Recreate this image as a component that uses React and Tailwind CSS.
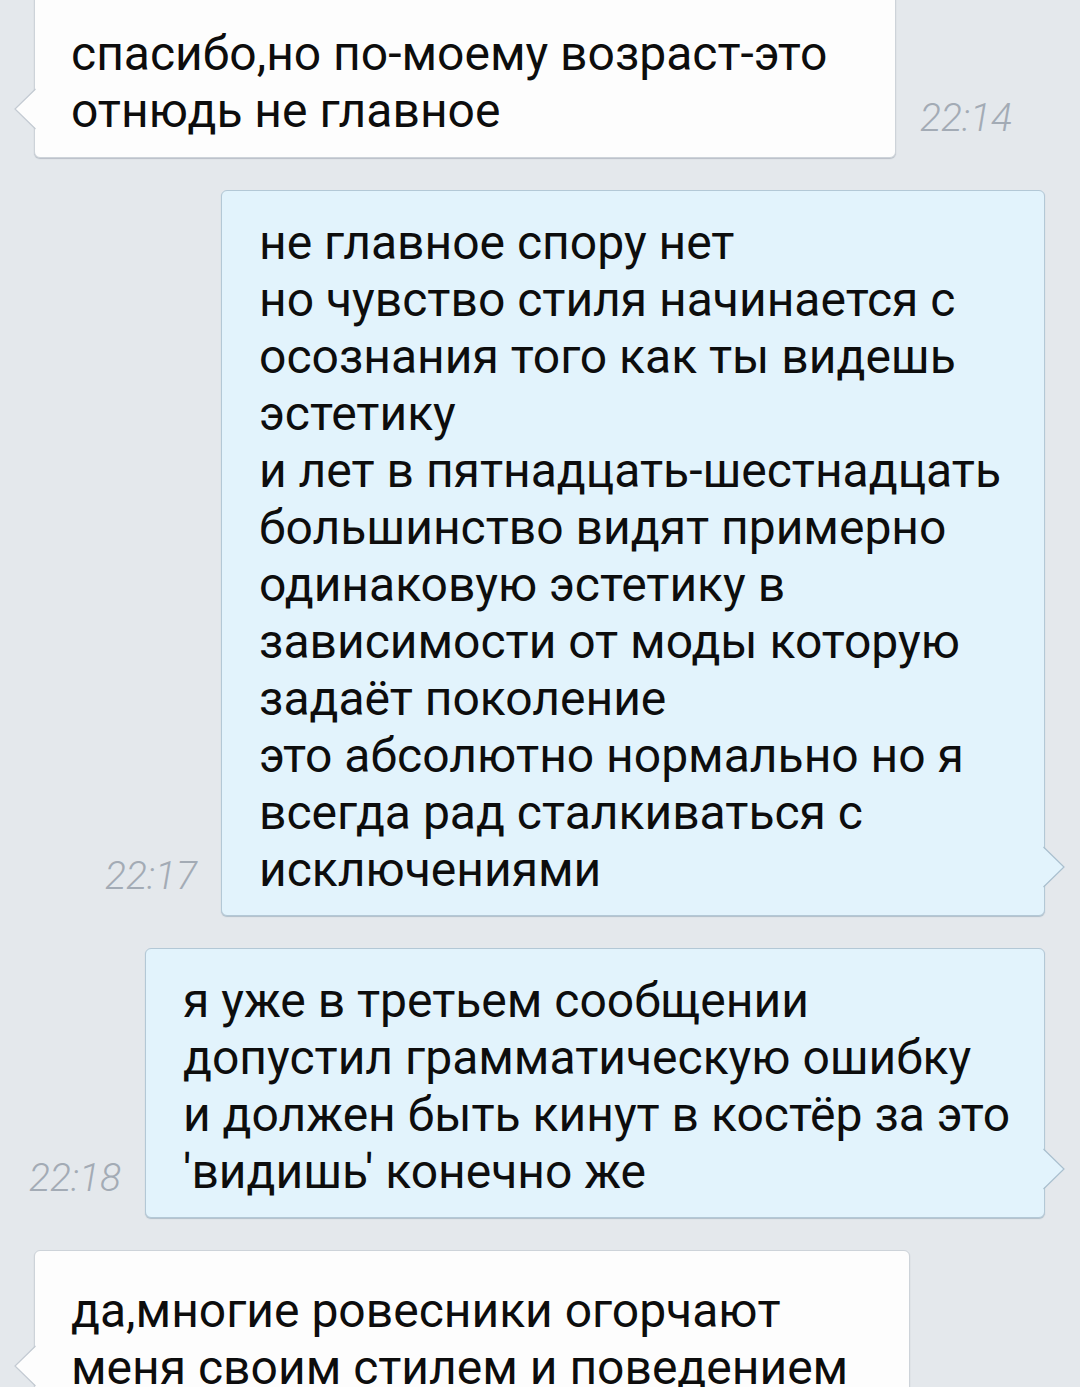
import React from 'react';

const messages = [
  {
    id: 1,
    out: false,
    time: '22:14',
    width: 'w-[862px]',
    pull: '-mt-[7px]',
    lines: ['спасибо,но по-моему возраст-это', 'отнюдь не главное'],
  },
  {
    id: 2,
    out: true,
    time: '22:17',
    width: 'w-[824px]',
    lines: [
      'не главное спору нет',
      'но чувство стиля начинается с',
      'осознания того как ты видешь',
      'эстетику',
      'и лет в пятнадцать-шестнадцать',
      'большинство видят примерно',
      'одинаковую эстетику в',
      'зависимости от моды которую',
      'задаёт поколение',
      'это абсолютно нормально но я',
      'всегда рад сталкиваться с',
      'исключениями',
    ],
  },
  {
    id: 3,
    out: true,
    time: '22:18',
    width: 'w-[900px]',
    lines: [
      'я уже в третьем сообщении',
      'допустил грамматическую ошибку',
      'и должен быть кинут в костёр за это',
      "'видишь' конечно же",
    ],
  },
  {
    id: 4,
    out: false,
    time: '',
    width: 'w-[876px]',
    lines: ['да,многие ровесники огорчают', 'меня своим стилем и поведением'],
  },
];

function Tail({ out }) {
  if (out) {
    return (
      <svg className="absolute -right-[21px] bottom-[28px] overflow-visible" width="22" height="40" viewBox="0 0 22 40">
        <polygon points="0,0 21,20 0,40" fill="#e2f3fc" />
        <polyline points="0.5,0 21,20 0.5,40" fill="none" stroke="#a9bfce" strokeWidth="1.2" />
      </svg>
    );
  }
  return (
    <svg className="absolute -left-[21px] bottom-[28px] overflow-visible" width="22" height="40" viewBox="0 0 22 40">
      <polygon points="22,0 1,20 22,40" fill="#fdfdfd" />
      <polyline points="21.5,0 1,20 21.5,40" fill="none" stroke="#c3cad2" strokeWidth="1.2" />
    </svg>
  );
}

function Time({ value, out }) {
  if (!value) return null;
  return (
    <span
      className={`text-[39px] leading-[46px] italic font-light text-[#a3abb5] mb-[17px] whitespace-nowrap ${out ? 'mr-[24px]' : 'ml-[24px]'}`}
    >
      {value}
    </span>
  );
}

function Bubble({ msg }) {
  const tone = msg.out
    ? 'bg-[#e2f3fc] border-[#b3c8d6] shadow-[0_1px_1px_rgba(110,140,160,0.45)] pl-[37px] pt-[23px] pb-[17px]'
    : 'bg-[#fdfdfd] border-[#cdd3d9] shadow-[0_1px_1px_rgba(120,130,145,0.4)] pl-[36px] pt-[31px] pb-[18px]';

  return (
    <div className={`relative shrink-0 rounded-[6px] border ${tone} ${msg.width}`}>
      <Tail out={msg.out} />
      <div className="text-[48px] leading-[57px] text-[#0d0d0d] whitespace-pre">
        {msg.lines.join('\n')}
      </div>
    </div>
  );
}

export default function App() {
  return (
    <div
      className="w-full h-[1392px] bg-[#e4e8ec] flex flex-col overflow-hidden"
      style={{ fontFamily: 'Roboto, "Noto Sans", sans-serif' }}
    >
      <div className="flex-1 min-h-0 overflow-hidden flex flex-col gap-[32px]">
        {messages.map(msg => (
          <div
            key={msg.id}
            className={`flex items-end ${msg.out ? 'justify-end pr-[35px]' : 'pl-[34px]'} ${msg.pull || ''}`}
          >
            {msg.out && <Time value={msg.time} out />}
            <Bubble msg={msg} />
            {!msg.out && <Time value={msg.time} />}
          </div>
        ))}
      </div>
      <div className="h-[5px] shrink-0 bg-white" />
    </div>
  );
}
